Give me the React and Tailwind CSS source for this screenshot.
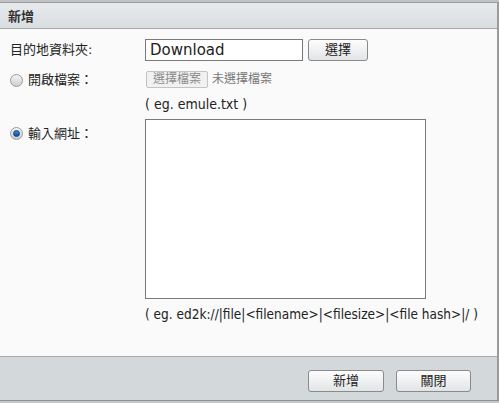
import React from "react";

const font = { fontFamily: '"DejaVu Sans", "Noto Sans CJK TC", sans-serif' };
const narrow = { fontFamily: '"DejaVu Sans Condensed", "DejaVu Sans", "Noto Sans CJK TC", sans-serif' };

// little fake radio, grey ring with optional blue dot
const Radio = ({ checked }) => (
  <span className="w-[13px] h-[13px] rounded-full border border-[#9a9a9a] bg-gradient-to-b from-[#f4f4f4] to-[#cfcfcf] flex items-center justify-center shrink-0">
    {checked && (
      <span className="w-[7px] h-[7px] rounded-full bg-gradient-to-b from-[#3b8fd6] to-[#0b4f9a] border border-[#0a3f7a]" />
    )}
  </span>
);

const Btn = ({ children, className = "" }) => (
  <button
    className={
      "h-[22px] rounded-[3px] border border-[#8a8a8a] bg-gradient-to-b from-[#fdfdfd] to-[#e2e4e6] text-[13px] text-[#222] flex items-center justify-center " +
      className
    }
  >
    {children}
  </button>
);

export default function App() {
  return (
    <div className="w-[499px] h-[403px] overflow-hidden bg-[#d3d8db] flex flex-col" style={font}>
      {/* strip of the page behind the dialog */}
      <div className="h-[3px] bg-[#bfc3c6] border-b border-[#9c9c9c]" />

      <div className="flex-1 flex flex-col border-r-2 border-[#9a9a9a]">
        {/* title */}
        <div className="h-[26px] flex items-center pl-[8px] pt-[2px] bg-gradient-to-b from-[#e7eaec] to-[#d9dee1] border-b border-[#a7a7a7]">
          <span className="text-[13px] font-bold text-[#333]">新增</span>
        </div>

        {/* body */}
        <div className="h-[328px] bg-[#fafafa] border-b border-[#a9a9a9] pt-[10px] text-[13px] text-[#222]">
          <div className="flex items-center h-[22px]">
            <div className="w-[145px] pl-[10px]">目的地資料夾:</div>
            <div className="w-[158px] h-[22px] border border-[#7a7a7a] bg-white flex items-center pl-[4px] text-[15px]">
              Download
            </div>
            <Btn className="w-[60px] ml-[5px]">選擇</Btn>
          </div>

          <div className="flex items-center h-[18px] mt-[9px]">
            <div className="w-[145px] pl-[10px] pt-[2px] flex items-center gap-[5px]">
              <Radio />
              <span>開啟檔案：</span>
            </div>
            <div className="ml-[1px] h-[17px] w-[62px] border border-[#c3c3c3] rounded-[2px] bg-[#f1f1f1] text-[#8c8c8c] text-[12px] flex items-center justify-center">
              選擇檔案
            </div>
            <span className="ml-[4px] text-[#777] text-[12px]">未選擇檔案</span>
          </div>

          <div className="pl-[145px] mt-[8px] h-[16px] leading-[16px] text-[14px]" style={narrow}>
            ( eg. emule.txt )
          </div>

          <div className="flex mt-[7px]">
            <div className="w-[145px] pl-[10px] pt-[5px] flex items-center gap-[5px] h-[24px]">
              <Radio checked />
              <span>輸入網址：</span>
            </div>
            <div className="w-[281px] h-[180px] border border-[#7a7a7a] bg-white" />
          </div>

          <div className="pl-[145px] mt-[7px] h-[16px] leading-[16px] text-[13.5px] whitespace-nowrap" style={narrow}>
            ( eg. ed2k://|file|&lt;filename&gt;|&lt;filesize&gt;|&lt;file hash&gt;|/ )
          </div>
        </div>

        {/* footer */}
        <div className="flex-1 flex justify-end items-start pt-[13px] pr-[26px] gap-[12px] bg-[#d3d8db]">
          <Btn className="w-[76px]">新增</Btn>
          <Btn className="w-[75px]">關閉</Btn>
        </div>
      </div>

      <div className="h-[3px] bg-[#c5c9cc] border-t border-[#8f8f8f]" />
    </div>
  );
}
